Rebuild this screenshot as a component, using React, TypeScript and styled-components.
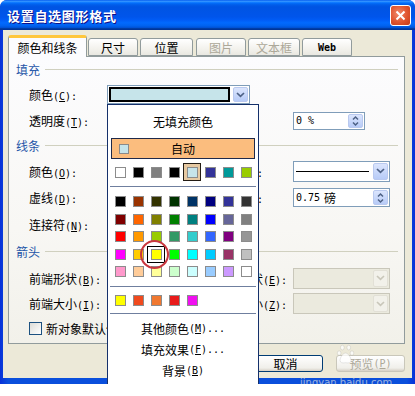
import React from "react";
import styled, { createGlobalStyle } from "styled-components";

const GlobalStyle = createGlobalStyle`
  * { box-sizing: border-box; }
  body {
    margin: 0;
    background: #fff;
    font-family: "Noto Sans CJK SC", "DejaVu Sans", sans-serif;
    font-size: 12px;
    color: #000;
  }
`;

const FIRST_ROW = ["#FFFFFF", "#000000", "#808080", "#000000", "#C6E4EA", "#333399", "#009999", "#99CC00"];
const PALETTE = [
  ["#000000", "#993300", "#333300", "#003300", "#003366", "#000080", "#333399", "#333333"],
  ["#800000", "#FF6600", "#808000", "#008000", "#008080", "#0000FF", "#666699", "#808080"],
  ["#FF0000", "#FF9900", "#99CC00", "#339966", "#33CCCC", "#3366FF", "#800080", "#969696"],
  ["#FF00FF", "#FFCC00", "#FFFF00", "#00FF00", "#00FFFF", "#00CCFF", "#993366", "#C0C0C0"],
  ["#FF99CC", "#FFCC99", "#FFFF99", "#CCFFCC", "#CCFFFF", "#99CCFF", "#CC99FF", "#FFFFFF"],
];
const RECENT = ["#FFFF00", "#F04A1E", "#F07830", "#E81B1B", "#F010F0"];

const Mono = styled.span`
  font-family: "DejaVu Sans Mono", "Liberation Mono", monospace;
  font-size: 10px;
`;

// label text + "(X):" in the half-width look of the old dialog font
const Mn = ({ text, k, tail = ":" }: { text: string; k: string; tail?: string }) => (
  <>
    {text}
    <Mono>
      (<u>{k}</u>){tail}
    </Mono>
  </>
);

const Chevron = ({ color = "#4D6185" }: { color?: string }) => (
  <svg width="9" height="6" viewBox="0 0 9 6">
    <path d="M1 1l3.5 3.3L8 1" fill="none" stroke={color} strokeWidth="1.7" />
  </svg>
);

const SpinArrows = () => (
  <svg width="7" height="12" viewBox="0 0 7 12">
    <path d="M1 4.5l2.5-2.5L6 4.5M1 7.5l2.5 2.5L6 7.5" fill="none" stroke="#4D6185" strokeWidth="1.5" />
  </svg>
);

const Window = styled.div`
  position: relative;
  width: 415px;
  height: 384px;
  display: flex;
  flex-direction: column;
  background: linear-gradient(90deg, #0831d9, #0a4fdc 2%, #0a4fdc 98%, #0831d9);
  border-radius: 7px 7px 0 0;
`;

const TitleBar = styled.div`
  height: 30px;
  flex: none;
  display: flex;
  align-items: center;
  justify-content: space-between;
  padding: 1px 4px 0 7px;
  border-radius: 7px 7px 0 0;
  background: linear-gradient(
    #0058ee 0%, #3593ff 4%, #288eff 6%, #127dff 8%, #036ffc 10%, #0262ee 14%,
    #0057e5 20%, #0054e3 24%, #0055eb 56%, #005bf5 66%, #026afe 76%, #0062ef 86%,
    #0052d6 92%, #0040ab 94%, #003092 100%
  );
`;

const Title = styled.span`
  color: #fff;
  font-size: 13px;
  font-weight: bold;
  letter-spacing: 0.7px;
  text-shadow: 1px 1px #0f1089;
`;

const CloseBtn = styled.span`
  width: 21px;
  height: 21px;
  border: 1px solid #fff;
  border-radius: 3px;
  background: radial-gradient(circle at 40% 40%, #f08a6c, #e0542e 55%, #c53a17);
  display: flex;
  align-items: center;
  justify-content: center;
`;

const Client = styled.div`
  flex: 1;
  margin: 0 3px 6px;
  background: #ece9d8;
  padding: 5px 7px 0 5px;
  display: flex;
  flex-direction: column;
`;

const TabStrip = styled.div`
  height: 21px;
  display: flex;
  align-items: flex-end;
  position: relative;
  z-index: 2;
`;

const Tab = styled.div<{ $w: number; $ml: number; $active?: boolean; $off?: boolean }>`
  width: ${(p) => p.$w}px;
  margin-left: ${(p) => p.$ml}px;
  height: ${(p) => (p.$active ? 22 : 18)}px;
  margin-bottom: ${(p) => (p.$active ? -1 : 0)}px;
  display: flex;
  align-items: center;
  justify-content: center;
  border: 1px solid #919b9c;
  border-bottom: ${(p) => (p.$active ? "none" : "1px solid #919b9c")};
  border-top: ${(p) => (p.$active ? "3px solid #ffc73c" : "1px solid #919b9c")};
  border-radius: 3px 3px 0 0;
  background: ${(p) => (p.$active ? "#fcfcfe" : "linear-gradient(#ffffff, #f3f2ed 60%, #e9e8e1)")};
  color: ${(p) => (p.$off ? "#aca899" : "#000")};
  padding-top: ${(p) => (p.$active ? 0 : 1)}px;
`;

const Panel = styled.div`
  width: 397px;
  height: 288px;
  border: 1px solid #919b9c;
  background: linear-gradient(#fcfcfe, #f8f7f4 60%, #f2f1ea);
  display: flex;
  flex-direction: column;
`;

const Section = styled.div<{ $h: number }>`
  height: ${(p) => p.$h}px;
  display: flex;
  align-items: center;
  gap: 5px;
  padding: 0 6px 0 7px;
  color: #1f56a8;
  &::after {
    content: "";
    flex: 1;
    height: 1px;
    background: #d0d0bf;
  }
`;

const Row = styled.div<{ $h: number }>`
  height: ${(p) => p.$h}px;
  display: grid;
  grid-template-columns: 78px 108px 78px 97px;
  align-items: center;
  padding-left: 20px;
  white-space: nowrap;
`;

const Field = styled.div<{ $w: number; $h: number; $off?: boolean }>`
  width: ${(p) => p.$w}px;
  height: ${(p) => p.$h}px;
  border: 1px solid ${(p) => (p.$off ? "#c9c7ba" : "#7f9db9")};
  background: ${(p) => (p.$off ? "#ebeade" : "#fff")};
  display: flex;
  align-items: center;
  padding-left: 2px;
`;

const FieldText = styled.span`
  flex: 1;
  display: flex;
  align-items: center;
  gap: 4px;
  font-size: 12px;
`;

const ColorWell = styled.span`
  flex: 1;
  align-self: stretch;
  margin: 1px 2px 1px -1px;
  border: 2px solid #000;
  background: #c6e4ea;
`;

const DropBtn = styled.span<{ $off?: boolean }>`
  width: 15px;
  align-self: stretch;
  margin: 1px;
  display: flex;
  align-items: center;
  justify-content: center;
  border: 1px solid ${(p) => (p.$off ? "#e2e0d6" : "#b9c9ef")};
  border-radius: 2px;
  background: ${(p) => (p.$off ? "#f2f1ea" : "linear-gradient(#dbe5fd, #b7cbf7)")};
`;

const LineSample = styled.span`
  flex: 1;
  height: 1px;
  margin-right: 3px;
  background: #000;
`;

const Slider = styled.span`
  width: 100px;
  height: 4px;
  border: 1px solid #9d9c99;
  background: #f2f1ea;
`;

const CheckRow = styled.div<{ $h: number }>`
  height: ${(p) => p.$h}px;
  display: flex;
  align-items: center;
  gap: 4px;
  padding-left: 20px;
`;

const CheckBox = styled.span`
  width: 13px;
  height: 13px;
  border: 1px solid #1c5180;
  background: linear-gradient(135deg, #dcdcd7, #fff);
`;

const ButtonRow = styled.div`
  margin-top: 11px;
  height: 17px;
  display: flex;
  justify-content: flex-end;
`;

const Button = styled.div<{ $w: number; $ml: number; $off?: boolean }>`
  width: ${(p) => p.$w}px;
  margin-left: ${(p) => p.$ml}px;
  border: 1px solid ${(p) => (p.$off ? "#c9c7ba" : "#003c74")};
  border-radius: 3px;
  background: linear-gradient(#ffffff, #f0efea 80%, #d6d0c5);
  color: ${(p) => (p.$off ? "#aca899" : "#000")};
  display: flex;
  align-items: center;
  justify-content: center;
`;

const Popup = styled.div`
  position: absolute;
  left: 107px;
  top: 104px;
  width: 152px;
  height: 284px;
  z-index: 5;
  background: #fff;
  border: 1px solid #15306b;
  display: flex;
  flex-direction: column;
  padding: 0 2px;
`;

const NoFill = styled.div`
  height: 33px;
  display: flex;
  align-items: center;
  justify-content: center;
`;

const AutoBox = styled.div`
  height: 21px;
  margin: 0 1px;
  border: 1px solid #1f2a4a;
  background: #fbbd7e;
  display: flex;
  align-items: center;
  position: relative;
  justify-content: center;
`;

const AutoSwatch = styled.span`
  position: absolute;
  left: 7px;
  top: 5px;
  width: 10px;
  height: 10px;
  border: 1px solid #8a8a8a;
  background: #c6e4ea;
`;

const SwatchRow = styled.div<{ $h: number; $mt: number }>`
  height: ${(p) => p.$h}px;
  margin-top: ${(p) => p.$mt}px;
  padding-left: 1px;
  display: flex;
`;

const Cell = styled.span<{ $state?: "sel" | "hover" }>`
  width: 18px;
  height: 100%;
  display: flex;
  align-items: center;
  justify-content: center;
  border: 1px solid
    ${(p) => (p.$state === "sel" ? "#231c14" : p.$state === "hover" ? "#000" : "transparent")};
  background: ${(p) => (p.$state === "sel" ? "#e6c9a2" : "transparent")};
`;

const Swatch = styled.span<{ $c: string }>`
  width: 11px;
  height: 11px;
  border: 1px solid #8c8c8c;
  background: ${(p) => p.$c};
`;

const Sep = styled.div<{ $mt: number }>`
  height: 1px;
  margin-top: ${(p) => p.$mt}px;
  background: #6f7f9f;
`;

const MenuItem = styled.div`
  height: 21px;
  display: flex;
  align-items: center;
  justify-content: center;
`;

const Ring = styled.span`
  position: absolute;
  left: 140px;
  top: 240px;
  width: 29px;
  height: 29px;
  z-index: 6;
  border: 2.5px solid #c9373f;
  border-radius: 50%;
`;

// faint site watermark over the lower right corner
const Watermark = styled.div`
  position: absolute;
  left: 300px;
  top: 343px;
  z-index: 7;
  display: flex;
  flex-direction: column;
  align-items: center;
  pointer-events: none;
`;

const WmUrl = styled.div`
  font-family: "DejaVu Sans", sans-serif;
  font-size: 10px;
  line-height: 11px;
  margin-top: 12px;
  color: rgba(255, 255, 255, 0.55);
  text-shadow: 0 0 1px rgba(120, 120, 120, 0.35);
`;

const Paw = () => (
  <svg width="20" height="22" viewBox="0 0 20 24">
    <g fill="rgba(255,255,255,0.75)" stroke="rgba(150,150,150,0.4)" strokeWidth="0.6">
      <ellipse cx="6" cy="5" rx="2" ry="2.6" />
      <ellipse cx="13" cy="5" rx="2" ry="2.6" />
      <ellipse cx="2.5" cy="11" rx="2" ry="2.4" />
      <ellipse cx="16.5" cy="11" rx="2" ry="2.4" />
      <path d="M9.5 11c-3 0-6 5-6 8s3 3 6 2.5c3 .5 6 .5 6-2.5s-3-8-6-8z" />
    </g>
  </svg>
);

export default function App() {
  return (
    <>
      <GlobalStyle />
      <Window>
        <TitleBar>
          <Title>设置自选图形格式</Title>
          <CloseBtn>
            <svg width="11" height="11" viewBox="0 0 11 11">
              <path d="M1.5 1.5l8 8M9.5 1.5l-8 8" stroke="#fff" strokeWidth="2" />
            </svg>
          </CloseBtn>
        </TitleBar>

        <Client>
          <TabStrip>
            <Tab $w={79} $ml={0} $active>颜色和线条</Tab>
            <Tab $w={50} $ml={1}>尺寸</Tab>
            <Tab $w={53} $ml={2}>位置</Tab>
            <Tab $w={50} $ml={3} $off>图片</Tab>
            <Tab $w={52} $ml={2} $off>文本框</Tab>
            <Tab $w={50} $ml={2}><Mono style={{ fontWeight: "bold" }}>Web</Mono></Tab>
          </TabStrip>

          <Panel>
            <Section $h={24}>填充</Section>
            <Row $h={27}>
              <span><Mn text="颜色" k="C" /></span>
              <Field $w={143} $h={19}>
                <ColorWell />
                <DropBtn><Chevron /></DropBtn>
              </Field>
            </Row>
            <Row $h={25}>
              <span><Mn text="透明度" k="T" /></span>
              <Slider />
              <span />
              <Field $w={72} $h={18}>
                <FieldText><Mono>0 %</Mono></FieldText>
                <DropBtn><SpinArrows /></DropBtn>
              </Field>
            </Row>

            <Section $h={25}>线条</Section>
            <Row $h={26}>
              <span><Mn text="颜色" k="O" /></span>
              <Field $w={100} $h={21}><FieldText /><DropBtn><Chevron /></DropBtn></Field>
              <span><Mn text="线型" k="S" /></span>
              <Field $w={97} $h={21}>
                <LineSample />
                <DropBtn><Chevron /></DropBtn>
              </Field>
            </Row>
            <Row $h={27}>
              <span><Mn text="虚线" k="D" /></span>
              <Field $w={100} $h={21}><FieldText /><DropBtn><Chevron /></DropBtn></Field>
              <span><Mn text="粗细" k="W" /></span>
              <Field $w={97} $h={19}>
                <FieldText><Mono>0.75</Mono>磅</FieldText>
                <DropBtn><SpinArrows /></DropBtn>
              </Field>
            </Row>
            <Row $h={27}>
              <span><Mn text="连接符" k="N" /></span>
              <Field $w={100} $h={21}><FieldText /><DropBtn><Chevron /></DropBtn></Field>
            </Row>

            <Section $h={27}>箭头</Section>
            <Row $h={26}>
              <span><Mn text="前端形状" k="B" /></span>
              <Field $w={100} $h={21}><FieldText /><DropBtn><Chevron /></DropBtn></Field>
              <span><Mn text="后端形状" k="E" /></span>
              <Field $w={97} $h={21} $off>
                <FieldText />
                <DropBtn $off><Chevron color="#c9c7ba" /></DropBtn>
              </Field>
            </Row>
            <Row $h={25}>
              <span><Mn text="前端大小" k="I" /></span>
              <Field $w={100} $h={21}><FieldText /><DropBtn><Chevron /></DropBtn></Field>
              <span><Mn text="后端大小" k="Z" /></span>
              <Field $w={97} $h={21} $off>
                <FieldText />
                <DropBtn $off><Chevron color="#c9c7ba" /></DropBtn>
              </Field>
            </Row>
            <CheckRow $h={24}>
              <CheckBox />
              <span>新对象默认值</span>
            </CheckRow>
          </Panel>

          <ButtonRow>
            <Button $w={75} $ml={0}>取消</Button>
            <Button $w={69} $ml={13} $off>
              <Mn text="预览" k="P" tail="" />
            </Button>
          </ButtonRow>
        </Client>

        <Popup>
          <NoFill>无填充颜色</NoFill>
          <AutoBox>
            <AutoSwatch />
            自动
          </AutoBox>
          <SwatchRow $h={18} $mt={4}>
            {FIRST_ROW.map((c, i) => (
              <Cell key={i} $state={i === 4 ? "sel" : undefined}>
                <Swatch $c={c} />
              </Cell>
            ))}
          </SwatchRow>
          <Sep $mt={5} />
          {PALETTE.map((row, r) => (
            <SwatchRow key={r} $h={17.5} $mt={r === 0 ? 6 : 0}>
              {row.map((c, i) => (
                <Cell key={i} $state={r === 3 && i === 2 ? "hover" : undefined}>
                  <Swatch $c={c} />
                </Cell>
              ))}
            </SwatchRow>
          ))}
          <Sep $mt={5} />
          <SwatchRow $h={18} $mt={5}>
            {RECENT.map((c, i) => (
              <Cell key={i}>
                <Swatch $c={c} />
              </Cell>
            ))}
          </SwatchRow>
          <Sep $mt={3} />
          <div style={{ marginTop: 4 }}>
            <MenuItem><Mn text="其他颜色" k="M" tail="..." /></MenuItem>
            <MenuItem><Mn text="填充效果" k="F" tail="..." /></MenuItem>
            <MenuItem><Mn text="背景" k="B" tail="" /></MenuItem>
          </div>
        </Popup>

        <Ring />

        <Watermark>
          <Paw />
          <WmUrl>jingyan.baidu.com</WmUrl>
        </Watermark>
      </Window>
    </>
  );
}
